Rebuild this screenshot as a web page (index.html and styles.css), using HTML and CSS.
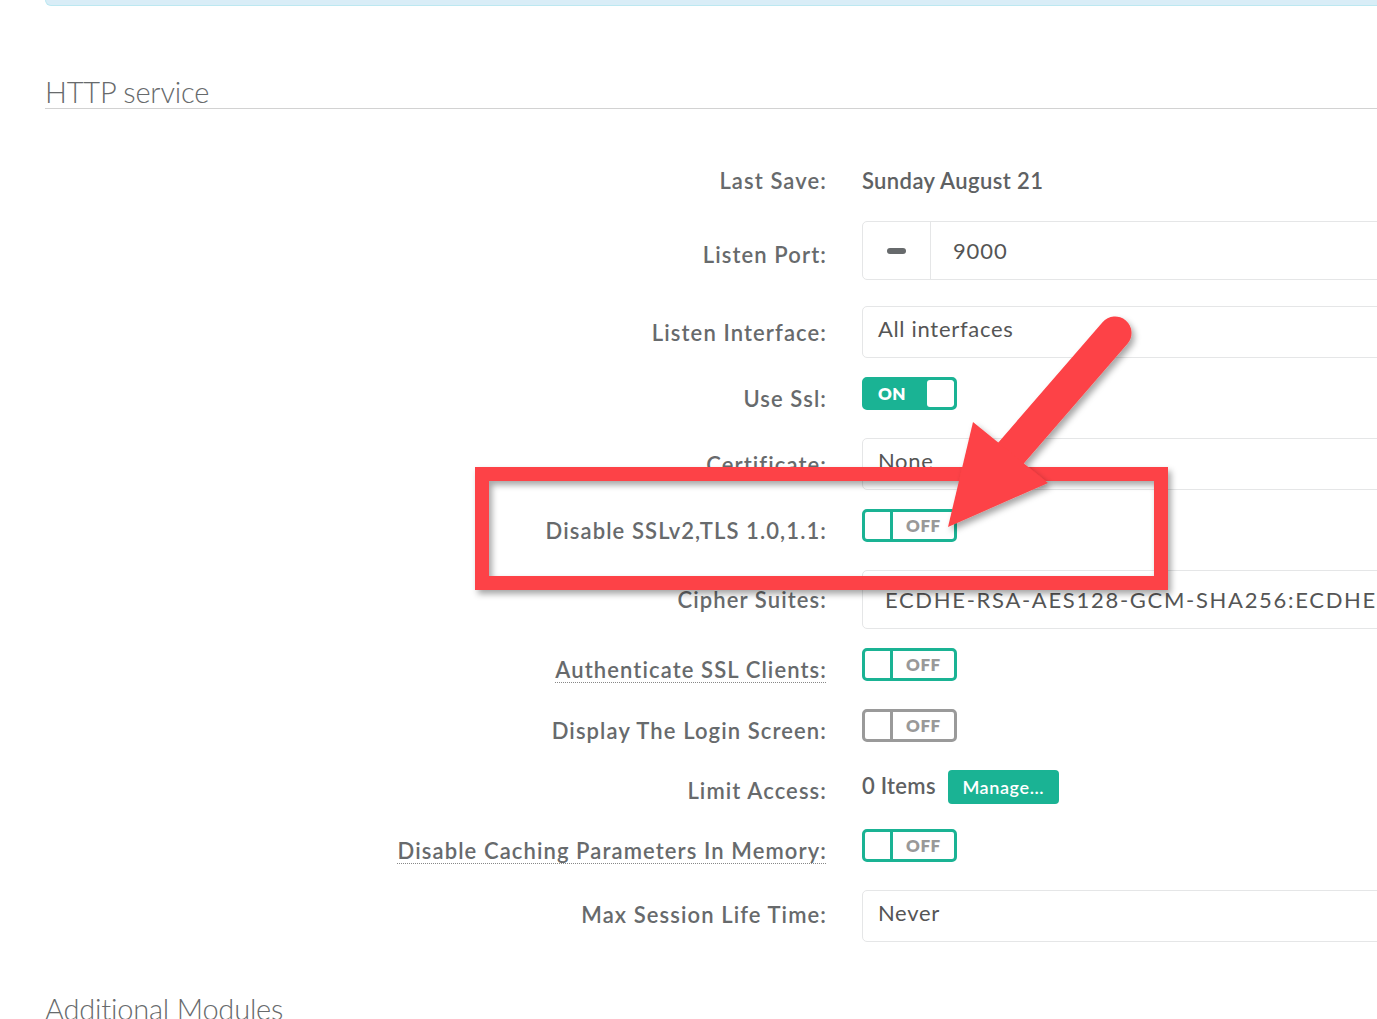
FILE: index.html
```html
<!DOCTYPE html>
<html>
<head>
<meta charset="utf-8">
<link rel="stylesheet" href="styles.css">
</head>
<body>
<div class="page">
  <div class="alert"></div>

  <h2 class="section-title first">HTTP service</h2>

  <div class="form">
    <div class="row row-static">
      <div class="label">Last Save:</div>
      <div class="control"><span class="static">Sunday August 21</span></div>
    </div>

    <div class="row row-port gap-l">
      <div class="label">Listen Port:</div>
      <div class="control">
        <div class="input-group">
          <div class="addon"><span class="minus"></span></div>
          <div class="input">9000</div>
        </div>
      </div>
    </div>

    <div class="row row-box">
      <div class="label">Listen Interface:</div>
      <div class="control"><div class="select">All interfaces</div></div>
    </div>

    <div class="row row-toggle gap-xl">
      <div class="label">Use Ssl:</div>
      <div class="control">
        <div class="toggle on"><span class="state">ON</span><span class="knob"></span></div>
      </div>
    </div>

    <div class="row row-box">
      <div class="label">Certificate:</div>
      <div class="control"><div class="select">None</div></div>
    </div>

    <div class="row row-toggle gap-xl">
      <div class="label">Disable SSLv2,TLS 1.0,1.1:</div>
      <div class="control">
        <div class="toggle off"><span class="knob"></span><span class="state">OFF</span></div>
      </div>
    </div>

    <div class="row row-cipher">
      <div class="label">Cipher Suites:</div>
      <div class="control"><div class="input cipher">ECDHE-RSA-AES128-GCM-SHA256:ECDHE-RSA-AES256-GCM-SHA384</div></div>
    </div>

    <div class="row row-toggle gap-xl">
      <div class="label"><abbr class="hint" title="Authenticate SSL Clients">Authenticate SSL Clients:</abbr></div>
      <div class="control">
        <div class="toggle off"><span class="knob"></span><span class="state">OFF</span></div>
      </div>
    </div>

    <div class="row row-toggle gap-xl">
      <div class="label">Display The Login Screen:</div>
      <div class="control">
        <div class="toggle off grey"><span class="knob"></span><span class="state">OFF</span></div>
      </div>
    </div>

    <div class="row row-button gap-m">
      <div class="label">Limit Access:</div>
      <div class="control inline">
        <span class="static">0 Items</span>
        <button class="btn">Manage...</button>
      </div>
    </div>

    <div class="row row-toggle gap-xl">
      <div class="label"><abbr class="hint" title="Disable Caching Parameters In Memory">Disable Caching Parameters In Memory:</abbr></div>
      <div class="control">
        <div class="toggle off"><span class="knob"></span><span class="state">OFF</span></div>
      </div>
    </div>

    <div class="row row-max">
      <div class="label">Max Session Life Time:</div>
      <div class="control"><div class="select">Never</div></div>
    </div>
  </div>

  <h2 class="section-title second">Additional Modules</h2>
</div>

<svg class="annotation" width="1377" height="1019" viewBox="0 0 1377 1019">
  <defs>
    <filter id="shadow" x="-10%" y="-10%" width="130%" height="130%">
      <feDropShadow dx="3" dy="4" stdDeviation="3" flood-color="#000" flood-opacity="0.35"/>
    </filter>
  </defs>
  <rect x="482" y="474" width="679" height="109" fill="none" stroke="#fd4346" stroke-width="14" filter="url(#shadow)"/>
  <g filter="url(#shadow)">
    <line x1="1115" y1="333" x2="1005" y2="460" stroke="#fd4346" stroke-width="33" stroke-linecap="round"/>
    <polygon points="973,422 1048,483 948,527" fill="#fd4346"/>
  </g>
</svg>
</body>
</html>
```

FILE: styles.css
```css
html, body {
  margin: 0;
  padding: 0;
  overflow: hidden;
  background: #fff;
}

body {
  width: 1377px;
  height: 1019px;
  position: relative;
  font-family: Lato, "Open Sans", "Liberation Sans", sans-serif;
  color: #676a6c;
}

.page {
  padding-left: 45px;
  width: 1600px;
}

.alert {
  height: 5px;
  background: #d9edf7;
  border: 1px solid #bce8f1;
  border-top: none;
  border-radius: 0 0 0 9px;
}

.section-title {
  margin: 0;
  font-size: 29px;
  font-weight: 300;
  line-height: 33px;
  letter-spacing: -0.2px;
  color: #676a6c;
}

.section-title.first {
  margin-top: 69px;
  border-bottom: 1px solid #d2d2d2;
}

.section-title.second {
  margin-top: 50px;
}

.form {
  margin-top: 51px;
}

.row {
  display: flex;
  align-items: flex-start;
  margin-bottom: 19px;
}

.row.gap-l { margin-bottom: 26px; }
.row.gap-m { margin-bottom: 25px; }
.row.gap-xl { margin-bottom: 28px; }

.label {
  width: 782px;
  flex: none;
  text-align: right;
  font-size: 22px;
  font-weight: 600;
  line-height: 22px;
  letter-spacing: 1.1px;
  margin-right: -1.1px;
  color: #676a6c;
}

.row-static .label { padding-top: 10px; }
.row-port .label { padding-top: 23px; }
.row-box .label { padding-top: 16px; }
.row-toggle .label { padding-top: 11px; }
.row-cipher .label { padding-top: 19px; }
.row-button .label { padding-top: 10px; }
.row-max .label { padding-top: 14px; }

.control {
  margin-left: 36px;
  flex: 1;
}

.control.inline {
  display: flex;
  align-items: center;
  gap: 12px;
  height: 34px;
}

.static {
  font-size: 22px;
  font-weight: 600;
  line-height: 42px;
  letter-spacing: 0.4px;
  color: #5e6163;
}

.control.inline .static {
  line-height: 34px;
  letter-spacing: 0.3px;
  position: relative;
  top: -1px;
}

.input-group {
  display: flex;
  height: 59px;
  box-sizing: border-box;
  border: 1px solid #e5e6e7;
  border-radius: 5px 0 0 5px;
}

.addon {
  width: 67px;
  border-right: 1px solid #e5e6e7;
  display: flex;
  align-items: center;
  justify-content: center;
}

.minus {
  width: 19px;
  height: 6px;
  border-radius: 3px;
  background: #676a6c;
}

.input {
  flex: 1;
  font-size: 22px;
  line-height: 57px;
  padding-left: 22px;
  letter-spacing: 0.9px;
  color: #555;
}

.input.cipher {
  height: 59px;
  box-sizing: border-box;
  border: 1px solid #e5e6e7;
  border-radius: 5px 0 0 5px;
  white-space: nowrap;
  overflow: hidden;
  letter-spacing: 1.7px;
}

.select {
  height: 52px;
  box-sizing: border-box;
  border: 1px solid #e5e6e7;
  border-radius: 5px 0 0 5px;
  font-size: 22px;
  line-height: 44px;
  padding-left: 15px;
  letter-spacing: 0.7px;
  color: #555;
}

.toggle {
  display: flex;
  width: 95px;
  height: 33px;
  box-sizing: border-box;
  border: 3px solid #1ab394;
  border-radius: 5px;
  overflow: hidden;
  font-size: 17px;
  font-weight: 800;
  letter-spacing: 0.5px;
}

.toggle.on {
  background: #1ab394;
}

.toggle.on .state {
  flex: 1;
  color: #fff;
  line-height: 27px;
  padding-left: 13px;
}

.toggle.on .knob {
  width: 27px;
  background: #fff;
  border-radius: 3px;
}

.toggle.off {
  background: #fff;
}

.toggle.off .knob {
  width: 25px;
  border-right: 3px solid #1ab394;
}

.toggle.off .state {
  flex: 1;
  text-align: center;
  color: #999;
  line-height: 27px;
}

.toggle.grey {
  border-color: #9a9a9a;
}

.toggle.grey .knob {
  border-right-color: #9a9a9a;
}

.hint {
  text-decoration: underline dotted #888;
  text-decoration-thickness: 1px;
  text-underline-offset: 4px;
  cursor: help;
}

.btn {
  height: 34px;
  width: 111px;
  border: none;
  border-radius: 4px;
  background: #1ab394;
  color: #fff;
  font-family: Lato, "Open Sans", "Liberation Sans", sans-serif;
  font-size: 18px;
  font-weight: 600;
  letter-spacing: 0.6px;
  padding: 0;
}

.annotation {
  position: absolute;
  left: 0;
  top: 0;
  pointer-events: none;
}
```
